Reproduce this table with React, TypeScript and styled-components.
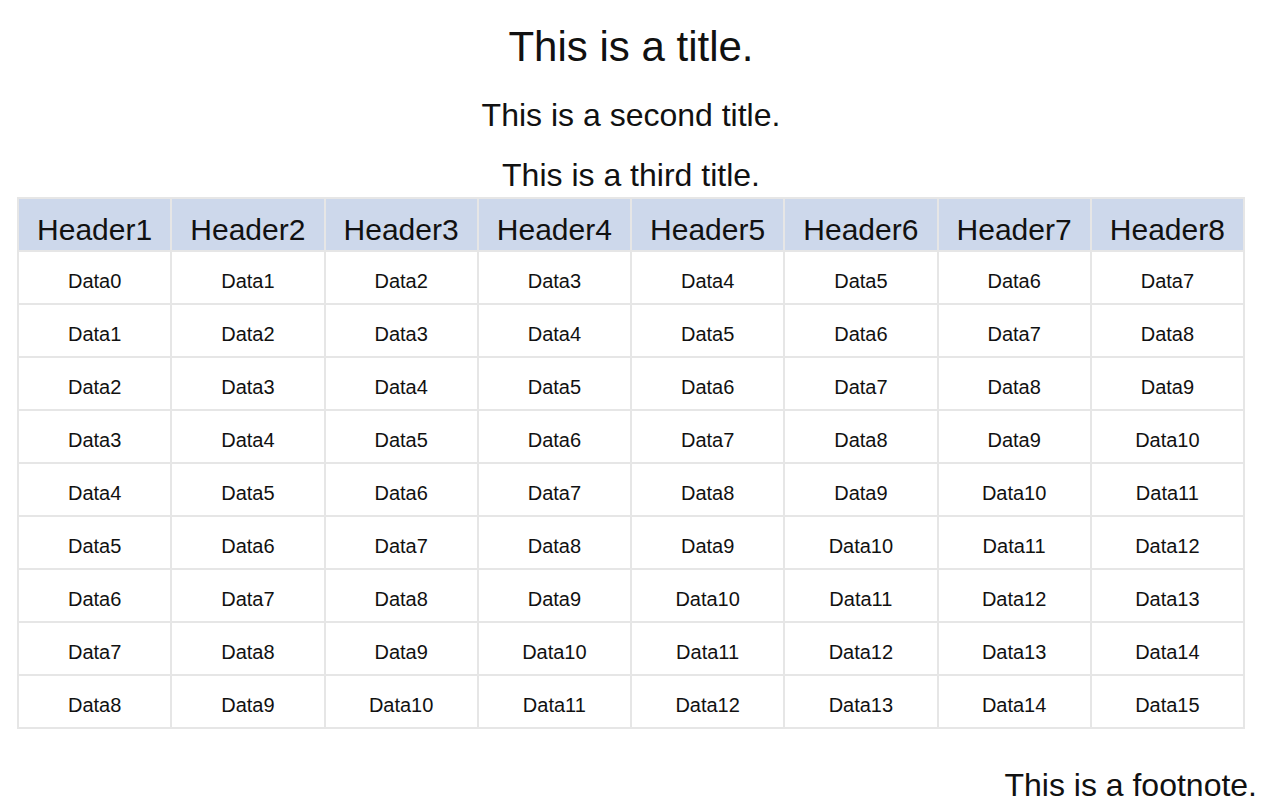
import styled, { createGlobalStyle } from "styled-components";

const GlobalStyle = createGlobalStyle`
  body {
    margin: 0;
    background: #ffffff;
    color: #111111;
    font-family: "Liberation Sans", Arial, sans-serif;
  }
`;

const Page = styled.div`
  display: flex;
  flex-direction: column;
  padding: 22px 19px 0 17px;
`;

const Title = styled.h1<{ $size: number; $lh: number; $gap: number }>`
  margin: ${(p) => p.$gap}px 0 0 0;
  font-size: ${(p) => p.$size}px;
  line-height: ${(p) => p.$lh}px;
  font-weight: 400;
  text-align: center;
`;

const Table = styled.table`
  margin-top: 3px;
  width: 1228px;
  border-collapse: collapse;
  table-layout: fixed;
  border: 2px solid #e6e6e6;
`;

const HeadCell = styled.th`
  height: 41px;
  padding: 10px 0 0 0;
  background: #cdd8eb;
  border: 2px solid #e6e6e6;
  font-size: 30px;
  font-weight: 400;
  text-align: center;
  vertical-align: middle;
`;

const DataCell = styled.td`
  height: 43px;
  padding: 8px 0 0 0;
  border: 2px solid #e6e6e6;
  font-size: 20px;
  text-align: center;
  vertical-align: middle;
`;

const Footnote = styled.div`
  margin: 37px -12px 0 0;
  font-size: 32px;
  line-height: 38px;
  text-align: right;
`;

const headers = Array.from({ length: 8 }, (_, i) => `Header${i + 1}`);
const rows = Array.from({ length: 9 }, (_, r) =>
  Array.from({ length: 8 }, (_, c) => `Data${r + c}`)
);

const App = () => {
  return (
    <Page>
      <GlobalStyle />
      <Title $size={42} $lh={50} $gap={0}>This is a title.</Title>
      <Title as="h2" $size={32} $lh={38} $gap={24}>This is a second title.</Title>
      <Title as="h3" $size={32} $lh={38} $gap={22}>This is a third title.</Title>
      <Table>
        <thead>
          <tr>
            {headers.map((h) => (
              <HeadCell key={h}>{h}</HeadCell>
            ))}
          </tr>
        </thead>
        <tbody>
          {rows.map((row, r) => (
            <tr key={r}>
              {row.map((cell, c) => (
                <DataCell key={c}>{cell}</DataCell>
              ))}
            </tr>
          ))}
        </tbody>
      </Table>
      <Footnote>This is a footnote.</Footnote>
    </Page>
  );
};

export default App;
